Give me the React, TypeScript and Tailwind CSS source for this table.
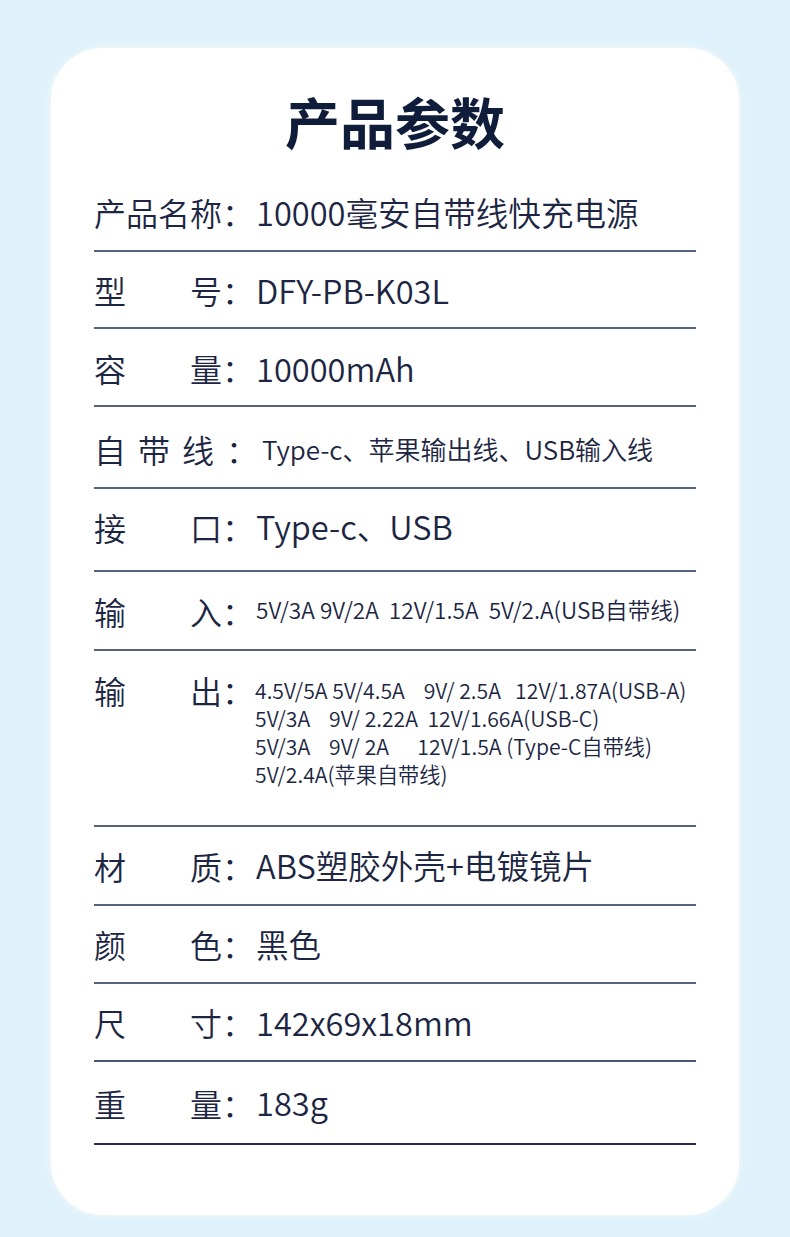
import React from "react";

const FONT = { fontFamily: '"Noto Sans CJK SC", "Noto Sans", sans-serif' };

function Label({ chars }: { chars: string[] }) {
  return (
    <div className="flex shrink-0 items-center text-[32px] leading-none">
      <div className="flex w-[128px] justify-between">
        {chars.map((c, i) => (
          <span key={i}>{c}</span>
        ))}
      </div>
      <span>：</span>
    </div>
  );
}

export default function App() {
  return (
    <div
      className="min-h-[1237px] w-full bg-[#dff1fa] pt-[48px] pb-[22px] font-[350] text-[#1c2642]"
      style={FONT}
    >
      <div className="mx-auto w-[688px] rounded-[52px] bg-white px-[43px] pt-[40px] pb-[70px] shadow-[0_0_10px_rgba(255,255,255,0.7)]">
        <h1 className="mb-[22px] text-center text-[55px] font-bold leading-[64px] text-[#0f1c3a]">
          产品参数
        </h1>

        <div className="flex flex-col">
          {/* 1 */}
          <div className="flex h-[78px] items-center border-b-2 border-[#55637e]">
            <Label chars={["产", "品", "名", "称"]} />
            <span className="ml-[2px] text-[32.6px] leading-none">10000毫安自带线快充电源</span>
          </div>
          {/* 2 */}
          <div className="flex h-[77px] items-center border-b-2 border-[#55637e] pt-[1px]">
            <Label chars={["型", "号"]} />
            <span className="ml-[2px] text-[32.6px] leading-none">DFY-PB-K03L</span>
          </div>
          {/* 3 */}
          <div className="flex h-[78px] items-center border-b-2 border-[#55637e] pt-[2px]">
            <Label chars={["容", "量"]} />
            <span className="ml-[2px] text-[32.6px] leading-none">10000mAh</span>
          </div>
          {/* 4 */}
          <div className="flex h-[82px] items-center border-b-2 border-[#55637e] pt-[3px]">
            <div className="flex shrink-0 items-center gap-[12px] text-[32px] leading-none">
              <span>自</span>
              <span>带</span>
              <span>线</span>
              <span>：</span>
            </div>
            <span className="ml-[4px] text-[26px] leading-none">Type-c、苹果输出线、USB输入线</span>
          </div>
          {/* 5 */}
          <div className="flex h-[83px] items-center border-b-2 border-[#55637e] pb-[6px]">
            <Label chars={["接", "口"]} />
            <span className="ml-[2px] text-[32.6px] leading-none">Type-c、USB</span>
          </div>
          {/* 6 */}
          <div className="flex h-[79px] items-center border-b-2 border-[#55637e]">
            <Label chars={["输", "入"]} />
            <span className="ml-[2px] whitespace-pre text-[22.6px] leading-none">
              5V/3A 9V/2A  12V/1.5A  5V/2.A(USB自带线)
            </span>
          </div>
          {/* 7 */}
          <div className="flex h-[176px] items-start border-b-2 border-[#55637e] pt-[25px]">
            <div className="flex h-[28px] items-center">
              <Label chars={["输", "出"]} />
            </div>
            <div className="ml-[1px] whitespace-pre text-[21.2px] leading-[28px]">
              <div>4.5V/5A 5V/4.5A    9V/ 2.5A   12V/1.87A(USB-A)</div>
              <div>5V/3A    9V/ 2.22A  12V/1.66A(USB-C)</div>
              <div>5V/3A    9V/ 2A      12V/1.5A (Type-C自带线)</div>
              <div>5V/2.4A(苹果自带线)</div>
            </div>
          </div>
          {/* 8 */}
          <div className="flex h-[79px] items-center border-b-2 border-[#55637e]">
            <Label chars={["材", "质"]} />
            <span className="ml-[2px] text-[32.6px] leading-none">ABS塑胶外壳+电镀镜片</span>
          </div>
          {/* 9 */}
          <div className="flex h-[78px] items-center border-b-2 border-[#55637e]">
            <Label chars={["颜", "色"]} />
            <span className="ml-[2px] text-[32.6px] leading-none">黑色</span>
          </div>
          {/* 10 */}
          <div className="flex h-[78px] items-center border-b-2 border-[#4a5775]">
            <Label chars={["尺", "寸"]} />
            <span className="ml-[2px] text-[32.6px] leading-none">142x69x18mm</span>
          </div>
          {/* 11 */}
          <div className="flex h-[83px] items-center border-b-2 border-[#262f4f]">
            <Label chars={["重", "量"]} />
            <span className="ml-[2px] text-[32.6px] leading-none">183g</span>
          </div>
        </div>
      </div>
    </div>
  );
}
